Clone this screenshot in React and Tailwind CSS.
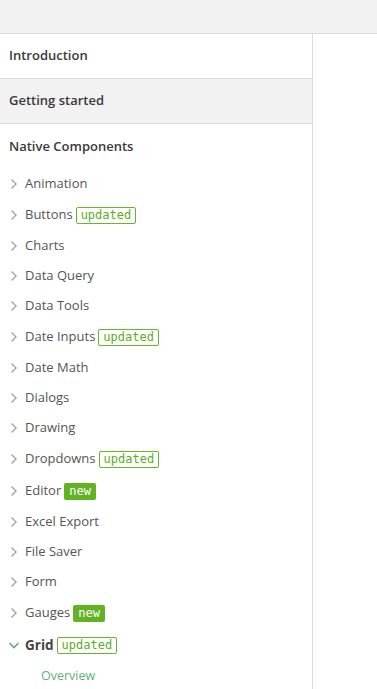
import React from "react";

const items = [
  { name: "Animation" },
  { name: "Buttons", badge: "updated" },
  { name: "Charts" },
  { name: "Data Query" },
  { name: "Data Tools" },
  { name: "Date Inputs", badge: "updated" },
  { name: "Date Math" },
  { name: "Dialogs" },
  { name: "Drawing" },
  { name: "Dropdowns", badge: "updated" },
  { name: "Editor", badge: "new" },
  { name: "Excel Export" },
  { name: "File Saver" },
  { name: "Form" },
  { name: "Gauges", badge: "new" },
  { name: "Grid", badge: "updated", open: true },
];

function Chevron({ open }) {
  return open ? (
    <svg width="12" height="12" viewBox="0 0 12 12" className="shrink-0">
      <path d="M1.5 4 L6 8.5 L10.5 4" fill="none" stroke="#5fae7c" strokeWidth="1.6" />
    </svg>
  ) : (
    <svg width="12" height="12" viewBox="0 0 12 12" className="shrink-0">
      <path d="M3.5 1.5 L8 6 L3.5 10.5" fill="none" stroke="#a3a3a3" strokeWidth="1.4" />
    </svg>
  );
}

function Badge({ type }) {
  if (type === "new") {
    return (
      <span className="-ml-[2px] rounded-[2px] bg-[#62b224] px-[5px] h-[17px] leading-[17px] text-[12px] text-white font-['DejaVu_Sans_Mono',monospace]">
        new
      </span>
    );
  }
  return (
    <span className="-ml-[2px] rounded-[2px] border border-[#66b52a] px-[4px] h-[17px] leading-[15px] text-[12px] text-[#5aae1c] font-['DejaVu_Sans_Mono',monospace]">
      updated
    </span>
  );
}

export default function App() {
  return (
    <div className="w-[377px] h-[689px] overflow-hidden bg-white font-['Open_Sans',sans-serif] flex flex-col">
      <div className="h-[34px] shrink-0 bg-[#f2f2f2] border-b border-[#dcdcdc]" />
      <div className="flex flex-1">
        <div className="w-[313px] shrink-0 border-r border-[#dcdcdc]">
          <div className="h-[45px] flex items-center px-[9px] border-b border-[#dcdcdc] text-[13px] font-semibold text-[#3a3a3a]">
            Introduction
          </div>
          <div className="h-[45px] flex items-center px-[9px] bg-[#f2f2f2] border-b border-[#dcdcdc] text-[13px] font-semibold text-[#3a3a3a]">
            Getting started
          </div>
          <div className="h-[45px] flex items-center px-[9px] pt-[1px] text-[13px] font-semibold text-[#3a3a3a]">
            Native Components
          </div>
          <div className="flex flex-col">
            {items.map((it) => (
              <div
                key={it.name}
                className={`${it.badge ? "h-[32px]" : "h-[30px]"} flex items-center pl-[8px] gap-[5px] text-[13px] text-[#555]`}
              >
                <Chevron open={it.open} />
                <span className={it.open ? "font-bold text-[#444] text-[13.5px]" : ""}>{it.name}</span>
                {it.badge && <Badge type={it.badge} />}
              </div>
            ))}
            <div className="h-[30px] flex items-center pl-[41px] text-[12.5px] text-[#5fae7c]">
              Overview
            </div>
          </div>
        </div>
        <div className="flex-1" />
      </div>
    </div>
  );
}
